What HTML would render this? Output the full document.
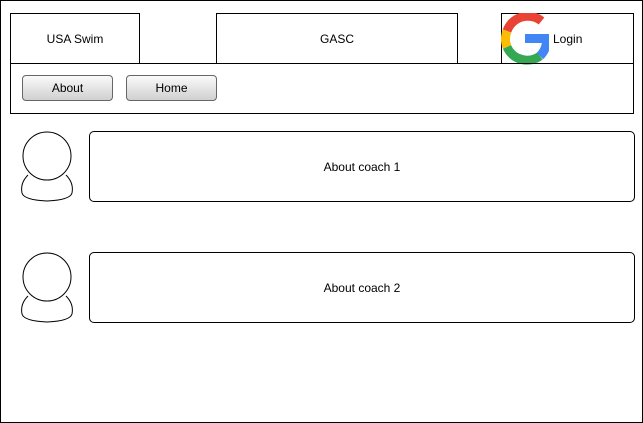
<!DOCTYPE html>
<html><head><style>
*{margin:0;padding:0;box-sizing:border-box}
body{width:643px;height:423px;position:relative;background:#fff;font-family:"Liberation Sans",sans-serif;font-size:12px;color:#000;overflow:hidden}
.b{position:absolute;border:1px solid #000;display:flex;align-items:center;justify-content:center}
.btn{position:absolute;border:1px solid #666;border-radius:4px;background:linear-gradient(#fafafa,#d0d0d0);display:flex;align-items:center;justify-content:center;font-size:12px}
.card{position:absolute;border:1px solid #000;border-radius:5px;display:flex;align-items:center;justify-content:center}
</style></head><body>
<div class="b" style="left:0;top:0;width:643px;height:423px"></div>
<div class="b" style="left:10px;top:13px;width:130px;height:51px">USA Swim</div>
<div class="b" style="left:216px;top:13px;width:242px;height:51px">GASC</div>
<div class="b" style="left:501px;top:13px;width:133px;height:51px;justify-content:flex-start;padding-left:51px">Login</div>
<svg style="position:absolute;left:501px;top:13px" width="48" height="52" viewBox="0 0 48 52">
<g fill="none" stroke-width="9">
<path d="M40.5 8 A22 22 0 0 0 6 18" stroke="#EA4335"/>
<path d="M6 18 A22 22 0 0 0 6 34" stroke="#FBBC05"/>
<path d="M6 34 A22 22 0 0 0 39 43" stroke="#34A853"/>
<path d="M39 43 A22 22 0 0 0 45.5 29" stroke="#4285F4"/>
</g>
<rect x="24" y="21" width="26" height="9" fill="#4285F4"/>
</svg>
<div class="b" style="left:10px;top:63px;width:624px;height:51px"></div>
<div class="btn" style="left:22px;top:75px;width:91px;height:26px">About</div>
<div class="btn" style="left:126px;top:75px;width:91px;height:26px">Home</div>
<svg style="position:absolute;left:18px;top:128px" width="60" height="76">
<path d="M10 47 Q2 55 4 65 Q6 72 29 73 Q52 72 54 65 Q56 55 48 47" fill="#fff" stroke="#000" stroke-width="1"/>
<ellipse cx="29" cy="28" rx="24" ry="24" fill="#fff" stroke="#000" stroke-width="1"/>
</svg>
<svg style="position:absolute;left:18px;top:249px" width="60" height="76">
<path d="M10 47 Q2 55 4 65 Q6 72 29 73 Q52 72 54 65 Q56 55 48 47" fill="#fff" stroke="#000" stroke-width="1"/>
<ellipse cx="29" cy="28" rx="24" ry="24" fill="#fff" stroke="#000" stroke-width="1"/>
</svg>
<div class="card" style="left:89px;top:131px;width:546px;height:71px">About coach 1</div>
<div class="card" style="left:89px;top:252px;width:546px;height:71px">About coach 2</div>
</body></html>
